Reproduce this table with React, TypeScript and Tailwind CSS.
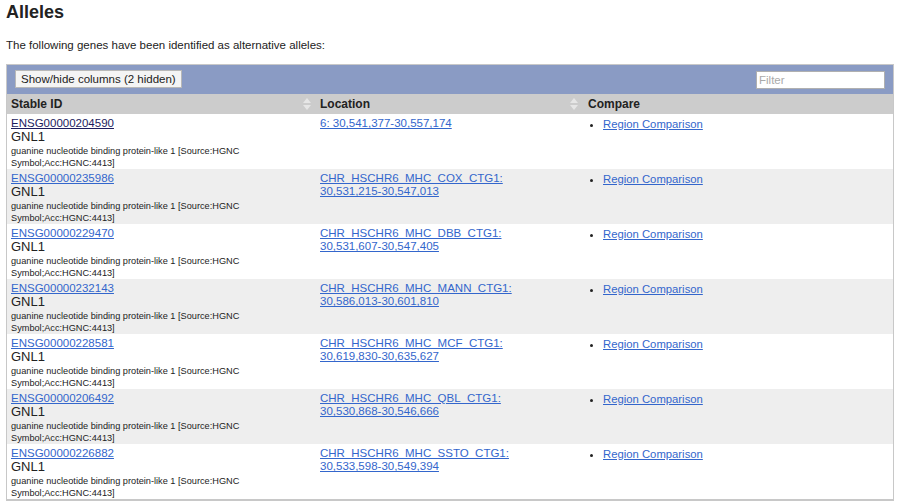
const rows = [
  { id: 'ENSG00000204590', loc: ['6: 30,541,377-30,557,174'], visited: true },
  { id: 'ENSG00000235986', loc: ['CHR_HSCHR6_MHC_COX_CTG1:', '30,531,215-30,547,013'] },
  { id: 'ENSG00000229470', loc: ['CHR_HSCHR6_MHC_DBB_CTG1:', '30,531,607-30,547,405'] },
  { id: 'ENSG00000232143', loc: ['CHR_HSCHR6_MHC_MANN_CTG1:', '30,586,013-30,601,810'] },
  { id: 'ENSG00000228581', loc: ['CHR_HSCHR6_MHC_MCF_CTG1:', '30,619,830-30,635,627'] },
  { id: 'ENSG00000206492', loc: ['CHR_HSCHR6_MHC_QBL_CTG1:', '30,530,868-30,546,666'] },
  { id: 'ENSG00000226882', loc: ['CHR_HSCHR6_MHC_SSTO_CTG1:', '30,533,598-30,549,394'] },
];

function SortIcon() {
  return (
    <svg width="8" height="12" viewBox="0 0 8 12" className="shrink-0">
      <path d="M4 0 L8 5 L0 5 Z" fill="#e6e6e6" />
      <path d="M4 12 L8 7 L0 7 Z" fill="#e6e6e6" />
    </svg>
  );
}

export default function App() {
  return (
    <div className="w-[900px] h-[504px] bg-white text-[#222] font-['Liberation_Sans',Arial,sans-serif] overflow-hidden">
      <h1 className="text-[18px] font-bold leading-[22px] pl-[6px] pt-[1px]">Alleles</h1>
      <p className="text-[11.5px] leading-[14px] pl-[6px] mt-[15px]">
        The following genes have been identified as alternative alleles:
      </p>

      <div className="ml-[6px] mt-[12px] w-[888px] border border-[#c8c8c8] border-b-2">
        <div className="h-[29px] bg-[#8a9bc4] flex items-center justify-between pl-[8px] pr-[8px]">
          <button className="h-[18px] px-[5px] bg-[#f4f4f4] border border-[#b8b8b8] text-[11.5px] leading-[16px] text-[#222] mt-[-2px]">
            Show/hide columns (2 hidden)
          </button>
          <div className="w-[129px] h-[18px] bg-white border border-[#b0b0b0] text-[11.5px] leading-[16px] text-[#aaa] pl-[2px]">
            Filter
          </div>
        </div>

        <div className="flex h-[20px] bg-[#cccccc] text-[12px] font-bold items-center">
          <div className="w-[307px] flex items-center justify-between pl-[4px] pr-[3px]">
            <span>Stable ID</span>
            <SortIcon />
          </div>
          <div className="w-[268px] flex items-center justify-between pl-[6px] pr-[4px]">
            <span>Location</span>
            <SortIcon />
          </div>
          <div className="flex-1 pl-[6px]">Compare</div>
        </div>

        {rows.map((r, i) => (
          <div key={r.id} className={`flex h-[55px] ${i % 2 === 1 ? 'bg-[#eeeeee]' : 'bg-white'}`}>
            <div className="w-[307px] pl-[4px] pt-[3px]">
              <a className={`block text-[11.5px] leading-[13px] underline ${r.visited ? 'text-[#1c1c5e]' : 'text-[#3366cc]'}`}>
                {r.id}
              </a>
              <div className="text-[13px] leading-[14px]">GNL1</div>
              <div className="text-[9.2px] leading-[12px] mt-[1px] w-[240px]">
                guanine nucleotide binding protein-like 1 [Source:HGNC Symbol;Acc:HGNC:4413]
              </div>
            </div>
            <div className="w-[268px] pl-[6px] pt-[3px] text-[11.5px] leading-[13px]">
              <a className="underline text-[#3366cc]">
                {r.loc[0]}
                {r.loc[1] && <br />}
                {r.loc[1]}
              </a>
            </div>
            <div className="flex-1 pt-[4px] pl-[10px]">
              <ul className="list-disc pl-[11px] text-[11.3px] leading-[13px] marker:text-[#222]">
                <li>
                  <a className="underline text-[#3366cc]">Region Comparison</a>
                </li>
              </ul>
            </div>
          </div>
        ))}
      </div>
    </div>
  );
}
